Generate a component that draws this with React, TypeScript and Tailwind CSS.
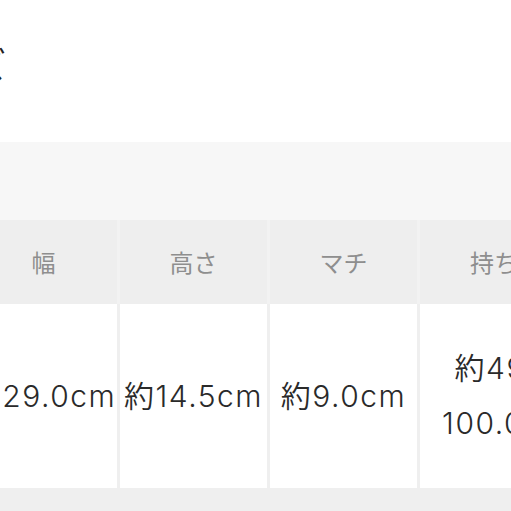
const font = { fontFamily: '"Noto Sans CJK JP", "Noto Sans", sans-serif' };
const valueFont = { fontFamily: 'Inter, "Noto Sans CJK JP", sans-serif' };

const headers = ["幅", "高さ", "マチ", "持ち手"];

const cell =
  "h-[184px] bg-white flex items-center justify-center text-[30px] font-[350] tracking-[1.5px] text-[#2a2a2a] whitespace-nowrap";

export default function App() {
  return (
    <div
      className="w-[511px] h-[511px] overflow-hidden bg-white"
      style={font}
    >
      <div className="h-[142px] pt-[42px]">
        <div className="flex justify-end w-[6px]">
          <span className="whitespace-nowrap text-[36px] leading-[42px] text-[#222]">
            サイズ
          </span>
        </div>
      </div>
      <div className="h-[78px] bg-[#f7f7f7]" />
      <div className="-ml-[30px] w-[620px]">
        <div className="grid grid-cols-[147px_147px_147px_172px] gap-x-[3px] bg-[#f2f2f2]">
          {headers.map((h) => (
            <div
              key={h}
              className="h-[84px] bg-[#eeeeee] flex items-center justify-center text-[24px] text-[#8e8e8e] whitespace-nowrap"
            >
              {h}
            </div>
          ))}
        </div>
        <div
          className="grid grid-cols-[147px_147px_147px_172px] gap-x-[3px] bg-[#efefef]"
          style={valueFont}
        >
          <div className={cell}>約29.0cm</div>
          <div className={cell}>約14.5cm</div>
          <div className={cell}>約9.0cm</div>
          <div className="h-[184px] bg-white flex items-center justify-center text-center text-[30px] font-[350] tracking-[1.5px] leading-[55px] text-[#2a2a2a] whitespace-nowrap">
            <span>
              約49〜
              <br />
              100.0cm
            </span>
          </div>
        </div>
        <div className="h-[40px] bg-[#efefef]" />
      </div>
    </div>
  );
}
